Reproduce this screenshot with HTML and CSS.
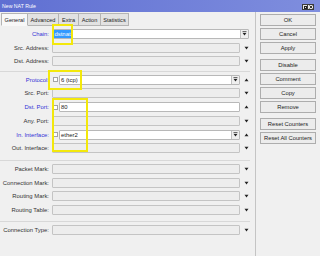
FILE: index.html
```html
<!DOCTYPE html>
<html>
<head>
<meta charset="utf-8">
<title>New NAT Rule</title>
<link rel="stylesheet" href="styles.css">
</head>
<body>
<div class="window">
  <div class="titlebar">
    <span class="title">New NAT Rule</span>
    <div class="wbtns">
      <span class="wbtn"><span class="maxi"></span></span>
      <span class="wbtn"><svg width="4" height="4" viewBox="0 0 4 4"><path d="M0.5 0.5L3.5 3.5M3.5 0.5L0.5 3.5" stroke="#222" stroke-width="0.9"/></svg></span>
    </div>
  </div>
  <div class="body">
    <div class="main">
      <div class="tabs">
        <span class="tab active t1">General</span>
        <span class="tab t2">Advanced</span>
        <span class="tab t3">Extra</span>
        <span class="tab t4">Action</span>
        <span class="tab t5">Statistics</span>
      </div>
      <div class="form">
        <div class="group">
          <div class="row">
            <span class="lbl on">Chain:</span>
            <div class="fld on wide"><span class="sel">dstnat</span><span class="dd"><svg width="5" height="5" viewBox="0 0 5 5"><path d="M0.5 0.7H4.5" stroke="#222" stroke-width="0.8"/><path d="M0.6 2H4.4L2.5 4.4Z" fill="#222"/></svg></span></div>
          </div>
          <div class="row">
            <span class="lbl">Src. Address:</span>
            <div class="fld"></div>
            <span class="arr"><svg width="5" height="4" viewBox="0 0 5 4"><path d="M0.5 0.8H4.5L2.5 3.4Z" fill="#222"/></svg></span>
          </div>
          <div class="row">
            <span class="lbl">Dst. Address:</span>
            <div class="fld"></div>
            <span class="arr"><svg width="5" height="4" viewBox="0 0 5 4"><path d="M0.5 0.8H4.5L2.5 3.4Z" fill="#222"/></svg></span>
          </div>
        </div>
        <div class="sep s1"></div>
        <div class="group">
          <div class="row">
            <span class="lbl on">Protocol:</span>
            <div class="fwrap"><span class="neg"></span><div class="fld on"><span class="val">6 (tcp)</span><span class="dd"><svg width="5" height="5" viewBox="0 0 5 5"><path d="M0.5 0.7H4.5" stroke="#222" stroke-width="0.8"/><path d="M0.6 2H4.4L2.5 4.4Z" fill="#222"/></svg></span></div></div>
            <span class="arr"><svg width="5" height="4" viewBox="0 0 5 4"><path d="M0.5 3.2H4.5L2.5 0.6Z" fill="#222"/></svg></span>
          </div>
          <div class="row">
            <span class="lbl">Src. Port:</span>
            <div class="fld"></div>
            <span class="arr"><svg width="5" height="4" viewBox="0 0 5 4"><path d="M0.5 0.8H4.5L2.5 3.4Z" fill="#222"/></svg></span>
          </div>
          <div class="row">
            <span class="lbl on">Dst. Port:</span>
            <div class="fwrap"><span class="neg"></span><div class="fld on"><span class="val">80</span></div></div>
            <span class="arr"><svg width="5" height="4" viewBox="0 0 5 4"><path d="M0.5 3.2H4.5L2.5 0.6Z" fill="#222"/></svg></span>
          </div>
          <div class="row">
            <span class="lbl">Any. Port:</span>
            <div class="fld"></div>
            <span class="arr"><svg width="5" height="4" viewBox="0 0 5 4"><path d="M0.5 0.8H4.5L2.5 3.4Z" fill="#222"/></svg></span>
          </div>
          <div class="row">
            <span class="lbl on">In. Interface:</span>
            <div class="fwrap"><span class="neg"></span><div class="fld on"><span class="val">ether2</span><span class="dd"><svg width="5" height="5" viewBox="0 0 5 5"><path d="M0.5 0.7H4.5" stroke="#222" stroke-width="0.8"/><path d="M0.6 2H4.4L2.5 4.4Z" fill="#222"/></svg></span></div></div>
            <span class="arr"><svg width="5" height="4" viewBox="0 0 5 4"><path d="M0.5 3.2H4.5L2.5 0.6Z" fill="#222"/></svg></span>
          </div>
          <div class="row">
            <span class="lbl">Out. Interface:</span>
            <div class="fld"></div>
            <span class="arr"><svg width="5" height="4" viewBox="0 0 5 4"><path d="M0.5 0.8H4.5L2.5 3.4Z" fill="#222"/></svg></span>
          </div>
        </div>
        <div class="sep s2"></div>
        <div class="group">
          <div class="row">
            <span class="lbl">Packet Mark:</span>
            <div class="fld"></div>
            <span class="arr"><svg width="5" height="4" viewBox="0 0 5 4"><path d="M0.5 0.8H4.5L2.5 3.4Z" fill="#222"/></svg></span>
          </div>
          <div class="row">
            <span class="lbl">Connection Mark:</span>
            <div class="fld"></div>
            <span class="arr"><svg width="5" height="4" viewBox="0 0 5 4"><path d="M0.5 0.8H4.5L2.5 3.4Z" fill="#222"/></svg></span>
          </div>
          <div class="row">
            <span class="lbl">Routing Mark:</span>
            <div class="fld"></div>
            <span class="arr"><svg width="5" height="4" viewBox="0 0 5 4"><path d="M0.5 0.8H4.5L2.5 3.4Z" fill="#222"/></svg></span>
          </div>
          <div class="row">
            <span class="lbl">Routing Table:</span>
            <div class="fld"></div>
            <span class="arr"><svg width="5" height="4" viewBox="0 0 5 4"><path d="M0.5 0.8H4.5L2.5 3.4Z" fill="#222"/></svg></span>
          </div>
        </div>
        <div class="sep s3"></div>
        <div class="group">
          <div class="row">
            <span class="lbl">Connection Type:</span>
            <div class="fld"></div>
            <span class="arr"><svg width="5" height="4" viewBox="0 0 5 4"><path d="M0.5 0.8H4.5L2.5 3.4Z" fill="#222"/></svg></span>
          </div>
        </div>
      </div>
    </div>
    <div class="side">
      <div class="bgroup">
        <span class="btn">OK</span>
        <span class="btn">Cancel</span>
        <span class="btn">Apply</span>
      </div>
      <div class="bgroup">
        <span class="btn">Disable</span>
        <span class="btn">Comment</span>
        <span class="btn">Copy</span>
        <span class="btn">Remove</span>
      </div>
      <div class="bgroup">
        <span class="btn">Reset Counters</span>
        <span class="btn">Reset All Counters</span>
      </div>
    </div>
  </div>
  <div class="mark m-chain"></div>
  <div class="mark m-proto"></div>
  <div class="mark m-port"></div>
</div>
</body>
</html>
```

FILE: styles.css
```css
* { box-sizing: border-box; }
html, body { margin: 0; padding: 0; }
body {
  width: 320px;
  height: 256px;
  overflow: hidden;
  background: #f0f0f0;
  font-family: "Liberation Sans", Arial, sans-serif;
  color: #222;
}
.window {
  position: relative;
  width: 320px;
  height: 256px;
  display: flex;
  flex-direction: column;
  background: #f0f0f0;
}
.titlebar {
  height: 12px;
  flex: none;
  background: linear-gradient(to right, #5f6fd2, #7f8ede);
  display: flex;
  align-items: center;
  justify-content: space-between;
  padding: 0 6px 0 2px;
}
.title {
  color: #fff;
  font-size: 5.2px;
  line-height: 1;
  padding-top: 1px;
}
.wbtns { display: flex; padding-top: 2px; }
.wbtn {
  width: 6px;
  height: 6px;
  border: 1px solid #3a3a3a;
  background: #e6e6e6;
  display: flex;
  align-items: center;
  justify-content: center;
}
.wbtn + .wbtn { border-left: none; }
.maxi {
  width: 3px;
  height: 3px;
  border: 1px solid #222;
}
.body {
  flex: 1;
  display: flex;
}
.main {
  width: 256px;
  flex: none;
  border-right: 1px solid #c4c4c4;
}
.tabs {
  display: flex;
  height: 13px;
  margin-top: 1px;
  padding-left: 1px;
}
.tab {
  font-size: 5.6px;
  border: 1px solid #b4b4b4;
  border-left: none;
  background: #e2e2e2;
  display: flex;
  align-items: center;
  justify-content: center;
  color: #222;
}
.tab.active {
  background: #f8f8f8;
  border-left: 1px solid #b4b4b4;
  border-bottom-color: #f8f8f8;
}
.t1 { width: 27px; }
.t2 { width: 31px; }
.t3 { width: 20px; }
.t4 { width: 22px; }
.t5 { width: 28px; }
.form { padding-top: 1.1px; }
.row {
  display: grid;
  grid-template-columns: 49px 188px 6px;
  column-gap: 3px;
  height: 13.75px;
  align-items: center;
}
.lbl {
  text-align: right;
  font-size: 5.9px;
  color: #333;
  white-space: nowrap;
}
.lbl.on { color: #3232d6; }
.fld {
  height: 10px;
  border: 1px solid #c4c4c4;
  border-radius: 1px;
  background: #ededed;
}
.fld.on {
  background: #fff;
  border-color: #b8b8b8;
  display: flex;
  align-items: center;
  flex: 1;
}
.fld.wide { grid-column: 2 / 4; }
.fwrap {
  display: flex;
  align-items: center;
  gap: 1px;
}
.neg {
  width: 5px;
  height: 5px;
  margin-left: 1px;
  border: 1px solid #a4a4a4;
  background: #fff;
}
.sel {
  margin-left: 1px;
  padding: 0 0.5px;
  background: #3399ff;
  color: #fff;
  font-size: 5.9px;
  line-height: 8px;
  height: 8px;
}
.val {
  margin-left: 1px;
  font-size: 5.9px;
  color: #222;
}
.dd {
  margin-left: auto;
  width: 8px;
  height: 8px;
  border-left: 1px solid #c0c0c0;
  background: #efefef;
  display: flex;
  align-items: center;
  justify-content: center;
}
.dd svg, .arr svg { display: block; }
.arr {
  display: flex;
  justify-content: center;
  align-items: center;
}
.sep { border-top: 1px solid #d8d8d8; width: 250px; }
.s1 { margin-top: 3px; margin-bottom: 0.5px; }
.s2 { margin-top: 4.6px; margin-bottom: 1.1px; }
.s3 { margin-top: 3.9px; margin-bottom: 1.1px; }
.side {
  flex: 1;
  padding: 2px 4px 0 4px;
  display: flex;
  flex-direction: column;
  gap: 5px;
}
.bgroup {
  display: flex;
  flex-direction: column;
  gap: 2px;
}
.btn {
  height: 12px;
  border: 1px solid #adadad;
  background: #ececec;
  font-size: 5.8px;
  display: flex;
  align-items: center;
  justify-content: center;
  color: #222;
  white-space: nowrap;
}
.mark {
  position: absolute;
  border: 2px solid #f3e80c;
}
.m-chain { left: 52px; top: 24px; width: 21px; height: 21px; }
.m-proto { left: 48px; top: 70px; width: 34px; height: 20px; }
.m-port { left: 52px; top: 97.5px; width: 36px; height: 54px; }
```
